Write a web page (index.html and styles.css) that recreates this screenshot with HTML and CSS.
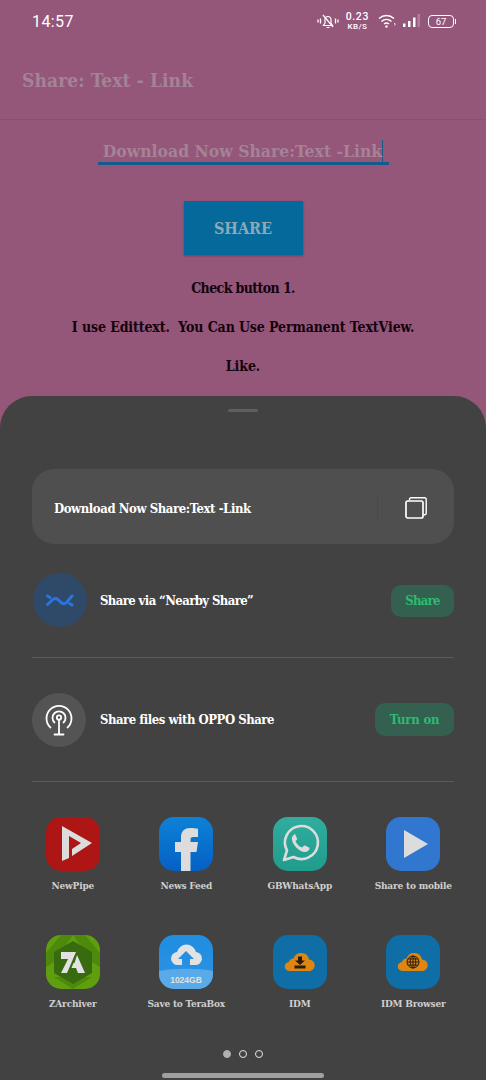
FILE: index.html
```html
<!DOCTYPE html>
<html lang="en">
<head>
	<meta charset="UTF-8">
	<title>Share: Text - Link</title>
	<link rel="stylesheet" href="styles.css">
</head>
<body>
<div class="screen">
	<div class="app">
		<div class="status">
			<span class="time">14:57</span>
			<div class="status-icons">
				<svg class="ic-bell" width="22" height="16" viewBox="0 0 22 16" fill="none" stroke="#fff" stroke-width="1.2">
					<path d="M1 6.500v3M3.500 5.500v5M18.500 5.500v5M21 6.500v3" stroke-width="1.300"/>
					<path d="M6.500 12.500h9l-1.500-2.500v-3.500a3 3 0 0 0-6 0v3.500z"/>
					<path d="M9.500 14.500h3M6 2l10 12"/>
				</svg>
				<div class="speed"><span class="speed-val">0.23</span><span class="speed-unit">KB/S</span></div>
				<svg class="ic-wifi" width="18" height="14" viewBox="0 0 18 14" fill="none" stroke="#fff" stroke-width="1.500">
					<path d="M1 4.500c4.500-4 10.500-4 15 0M3.500 7.500c3-2.700 7-2.700 10 0M6 10c1.500-1.200 3.500-1.200 5 0"/>
					<circle cx="8.500" cy="12.500" r="1.200" fill="#fff" stroke="none"/>
					<path d="M16 9l1.500 1.200-1.500 1.200" stroke-width="0.800"/>
				</svg>
				<svg class="ic-signal" width="17" height="14" viewBox="0 0 17 14">
					<rect x="0" y="9.500" width="2.500" height="3.500" fill="#fff"/>
					<rect x="5" y="7" width="2.500" height="6" fill="#fff"/>
					<rect x="10" y="3.500" width="2.500" height="9.500" fill="#fff"/>
					<rect x="14.500" y="0" width="2.500" height="13" fill="#fff" opacity="0.250"/>
				</svg>
				<div class="battery"><span>67</span></div>
			</div>
		</div>
		<div class="toolbar">Share: Text - Link</div>
		<div class="content">
			<div class="field"><span class="field-text">Download Now Share:Text -Link</span></div>
			<div class="share-btn">SHARE</div>
			<p class="note first">Check button 1.</p>
			<p class="note">I use Edittext.&nbsp; You Can Use Permanent TextView.</p>
			<p class="note">Like.</p>
		</div>
	</div>

	<div class="sheet">
		<div class="handle"></div>
		<div class="preview">
			<span class="preview-text">Download Now Share:Text -Link</span>
			<span class="preview-line"></span>
			<svg class="copy" width="22" height="22" viewBox="0 0 22 22" fill="none" stroke="#fff" stroke-width="1.700">
				<path d="M4.500 3.500V2.300A1.500 1.500 0 0 1 6 .8h13.700a1.500 1.500 0 0 1 1.500 1.500v14a1.500 1.500 0 0 1-1.500 1.500h-1.200" stroke-width="1.400"/>
				<rect x="1" y="4" width="17" height="17" rx="1.800"/>
			</svg>
		</div>

		<div class="row row-nearby">
			<div class="circle circle-blue">
				<svg width="28" height="14" viewBox="0 0 28 14" fill="none" stroke="#2a74da" stroke-width="3" stroke-linecap="round">
					<path d="M1.500 11.500L7 6.500Q9.500 4.500 12 6.500L15 9.500Q18 12 20.500 9.500L26 3"/>
					<path d="M1.500 3L4 4.500M23.500 10.500L26 12"/>
				</svg>
			</div>
			<span class="row-text">Share via “Nearby Share”</span>
			<span class="pill pill-share">Share</span>
		</div>

		<div class="row row-oppo">
			<div class="circle circle-grey">
				<svg width="28" height="32" viewBox="0 0 28 32" fill="none" stroke="#fff" stroke-width="1.800" stroke-linecap="round">
					<path d="M5.500 23.500a12.500 12.500 0 1 1 17 0"/>
					<path d="M9.500 18.500a6.500 6.500 0 1 1 9 0"/>
					<circle cx="14" cy="13.500" r="2.200"/>
					<path d="M14 16v14M9.500 30.500h9"/>
				</svg>
			</div>
			<span class="row-text">Share files with OPPO Share</span>
			<span class="pill pill-turn">Turn on</span>
		</div>

		<div class="apps">
			<div class="app-cell">
				<svg class="app-icon" viewBox="0 0 54 54">
					<rect width="54" height="54" rx="15" fill="#ae1616"/>
					<path d="M16 9L46 26 26 39V32L35 26 23 19V41L16 44z" fill="#dcdcdc"/>
				</svg>
				<span class="app-name">NewPipe</span>
			</div>
			<div class="app-cell">
				<svg class="app-icon" viewBox="0 0 54 54">
					<defs><linearGradient id="fb" x1="0" y1="0" x2="0" y2="1"><stop offset="0" stop-color="#0d82d6"/><stop offset="1" stop-color="#0560c4"/></linearGradient></defs>
					<rect width="54" height="54" rx="15" fill="url(#fb)"/>
					<path d="M22 54V35h-6V25h6v-5c0-6 4-9 9-9 3 0 6 .3 8 .8V20h-5c-2 0-2.500 1.300-2.500 3v2H39l-1.500 10h-6v19z" fill="#dcdcdc"/>
				</svg>
				<span class="app-name">News Feed</span>
			</div>
			<div class="app-cell">
				<svg class="app-icon" viewBox="0 0 54 54">
					<defs><linearGradient id="wa" x1="0" y1="0" x2="0" y2="1"><stop offset="0" stop-color="#31ad9f"/><stop offset="1" stop-color="#1f9c8c"/></linearGradient></defs>
					<rect width="54" height="54" rx="15" fill="url(#wa)"/>
					<path d="M11 43l3-9.500a16.500 16.500 0 1 1 6.500 6.500z" fill="none" stroke="#dcdcdc" stroke-width="2.600" stroke-linejoin="round"/>
					<path d="M21.500 17.500c-2 1-3 3-2.500 5.500 1 5 6.500 11 12 12 2.500.4 4.500-.8 5.500-3 .2-.7 0-1.200-.5-1.500l-4-2c-.6-.2-1 0-1.400.4l-1.300 1.700c-3-1-5.500-3.500-6.800-6.400l1.300-1.400c.4-.5.400-.9.200-1.400l-1.700-3.800c-.3-.6-.7-.7-1.500-.6z" fill="#dcdcdc"/>
				</svg>
				<span class="app-name">GBWhatsApp</span>
			</div>
			<div class="app-cell">
				<svg class="app-icon" viewBox="0 0 54 54">
					<rect width="54" height="54" rx="15" fill="#3277cf"/>
					<path d="M18 13l24 14-24 14z" fill="#dcdcdc"/>
				</svg>
				<span class="app-name">Share to mobile</span>
			</div>

			<div class="app-cell">
				<svg class="app-icon" viewBox="0 0 54 54">
					<rect width="54" height="54" rx="15" fill="#5f9e0f"/>
					<path d="M0 18L15 0h12L8 27 0 32zM54 18L39 0H27l19 27 8 5z" fill="#4d8a0c"/>
					<path d="M27 54l-19-12 38 0z" fill="#4d8a0c"/>
					<path d="M27 6l19 11v21L27 49 8 38V17z" fill="#386a10"/>
					<path d="M15 17H30L21 38H15L22 24H15z" fill="#e2e2e2"/>
					<path d="M31 20L39 38H32L30 33H25.500L27.500 28H28.500z" fill="#e2e2e2"/>
				</svg>
				<span class="app-name">ZArchiver</span>
			</div>
			<div class="app-cell">
				<svg class="app-icon" viewBox="0 0 54 54">
					<defs><linearGradient id="tb" x1="0" y1="0" x2="0" y2="1"><stop offset="0" stop-color="#1f8de0"/><stop offset="1" stop-color="#2e93e4"/></linearGradient></defs>
					<rect width="54" height="54" rx="15" fill="url(#tb)"/>
					<path d="M0 36c15-3 39-3 54 0v3a15 15 0 0 1-15 15H15A15 15 0 0 1 0 39z" fill="#5aa9e8"/>
					<path d="M19 30a6.500 6.500 0 0 1-1-13 9.800 9.800 0 0 1 19 0 6.500 6.500 0 0 1-1 13h-5v-6h4l-8-8-8 8h4v6z" fill="#e2e2e2"/>
					<text x="27" y="47.500" class="tb-text">1024GB</text>
				</svg>
				<span class="app-name">Save to TeraBox</span>
			</div>
			<div class="app-cell">
				<svg class="app-icon" viewBox="0 0 54 54">
					<rect width="54" height="54" rx="15" fill="#0f6ea6"/>
					<path d="M16.500 36a4.500 4.500 0 0 1-.5-9 4.500 4.500 0 0 1 4.500-3.500 8 8 0 0 1 15.500 1 5.800 5.800 0 0 1 1 11.500z" fill="#df8612"/>
					<path d="M25 21.500h4v4h3l-5 4.500-5-4.500h3zM21.500 30.500h11v3h-11z" fill="#2a1c0c"/>
				</svg>
				<span class="app-name">IDM</span>
			</div>
			<div class="app-cell">
				<svg class="app-icon" viewBox="0 0 54 54">
					<rect width="54" height="54" rx="15" fill="#0f6ea6"/>
					<path d="M16.500 36a4.500 4.500 0 0 1-.5-9 4.500 4.500 0 0 1 4.500-3.500 8 8 0 0 1 15.500 1 5.800 5.800 0 0 1 1 11.500z" fill="#df8612"/>
					<g fill="none" stroke="#2a1c0c" stroke-width="1">
						<circle cx="27" cy="27" r="6"/>
						<ellipse cx="27" cy="27" rx="2.800" ry="6"/>
						<path d="M27 21v12M21 27h12M21.800 24h10.400M21.800 30h10.400"/>
					</g>
				</svg>
				<span class="app-name">IDM Browser</span>
			</div>
		</div>

		<div class="dots">
			<span class="dot on"></span>
			<span class="dot"></span>
			<span class="dot"></span>
		</div>
		<div class="home-bar"></div>
	</div>
</div>
</body>
</html>
```

FILE: styles.css
```css
*{margin:0; padding:0; box-sizing:border-box;}
html,body{height:100%;}
body{background:#945679; font-family:"DejaVu Serif Condensed","DejaVu Serif","Liberation Serif",serif; font-stretch:condensed; font-weight:700; overflow:hidden;}

.screen{width:486px; height:1080px; display:flex; flex-direction:column; background:#945679;}
.app{height:396px; flex:none;}

/* status bar */
.status{height:44px; display:flex; align-items:center; justify-content:space-between; padding:0 32px 2px 32px; color:#fff;}
.time{font-family:Roboto,"Liberation Sans",sans-serif; font-weight:400; font-stretch:normal; font-size:16px; letter-spacing:0.4px;}
.status-icons{display:flex; align-items:center;}
.ic-bell{margin-right:7px;}
.speed{display:flex; flex-direction:column; align-items:center; font-family:Roboto,"Liberation Sans",sans-serif; font-weight:500; font-stretch:normal; margin-right:9px;}
.speed-val{font-size:10.500px; line-height:10px; letter-spacing:0.6px;}
.speed-unit{font-size:8px; line-height:9px; letter-spacing:0.4px;}
.ic-wifi{margin-right:7px;}
.ic-signal{margin-right:8px;}
.battery{width:26px; height:13px; border:1px solid #fff; border-radius:4px; display:flex; align-items:center; justify-content:center; position:relative; font-family:Roboto,"Liberation Sans",sans-serif; font-weight:400; font-stretch:normal; font-size:9.500px;}
.battery:after{content:""; position:absolute; right:-3px; top:3px; width:1.500px; height:5px; background:#fff;}

/* toolbar */
.toolbar{height:76px; padding:0 0 4px 22px; display:flex; align-items:center; font-size:19px; letter-spacing:0.1px; color:#a58397; border-bottom:1px solid #8a5070;}

/* content */
.content{display:flex; flex-direction:column; align-items:center; padding-top:20px;}
.field{width:291px; height:25px; border-bottom:3px solid #115c8a; display:flex; justify-content:center; font-size:17.400px; color:#a58397; line-height:22px;}
.field-text{border-right:1px solid #115c8a; height:25px; white-space:nowrap;}
.share-btn{width:119px; height:54px; margin-top:36px; background:#06699c; color:#8fa9b4; display:flex; align-items:center; justify-content:center; font-size:16px; box-shadow:0 1px 2px rgba(60,30,60,.4);}
.note{font-size:14px; letter-spacing:-0.1px; color:#12030c; line-height:20px; margin-top:19px; white-space:nowrap;}
.note.first{margin-top:23px; letter-spacing:-0.6px;}

/* bottom sheet */
.sheet{flex:1; background:#424242; border-radius:32px 32px 0 0; display:flex; flex-direction:column; padding-top:13px; position:relative;}
.handle{width:30px; height:3px; border-radius:2px; background:#5f5f5f; align-self:center;}
.preview{height:75px; margin:57px 32px 0 32px; background:#4f4f4f; border-radius:22px; display:flex; align-items:center; padding:0 27px 0 22px;}
.preview-text{flex:1; color:#fff; font-size:13px; letter-spacing:-0.42px; padding-top:4px;}
.preview-line{width:1px; height:24px; background:#484848; margin-right:27px;}
.copy{margin-top:2px;}

.row{display:flex; align-items:center; color:#fff;}
.row-nearby{height:99px; margin-top:14px; padding:0 32px 15px 33px;}
.row-oppo{height:125px; margin:0 32px; border-top:1px solid #5a5a5a; border-bottom:1px solid #5a5a5a;}
.circle{width:54px; height:54px; border-radius:50%; display:flex; align-items:center; justify-content:center; flex:none;}
.circle-blue{background:#2f4a68;}
.circle-grey{background:#545454;}
.row-text{flex:1; font-size:13px; letter-spacing:-0.48px; padding-left:13px; white-space:nowrap;}
.row-nearby .row-text{letter-spacing:-0.6px;}
.row-oppo .row-text{padding-left:14px;}
.pill{border-radius:10px; background:#33604f; color:#2dbb74; font-size:13px; display:flex; align-items:center; justify-content:center;}
.pill-share{width:63px; height:32px; margin-top:1px; letter-spacing:-0.7px;}
.pill-turn{width:79px; height:33px; letter-spacing:-0.2px;}

.apps{display:grid; grid-template-columns:repeat(4,113.500px); grid-auto-rows:118px; margin:35px 0 0 16px;}
.app-cell{display:flex; flex-direction:column; align-items:center;}
.app-icon{width:54px; height:54px; display:block;}
.app-name{font-size:10px; letter-spacing:-0.2px; color:#cfcfcf; margin-top:8px; line-height:14px; white-space:nowrap;}
.tb-text{font-family:"Liberation Sans",sans-serif; font-size:8.500px; font-weight:700; letter-spacing:0; fill:#e2e2e2; text-anchor:middle;}

.dots{position:absolute; left:223px; top:654px; display:flex; gap:8px;}
.dot{width:8px; height:8px; border-radius:50%; border:1.500px solid #e6e6e6;}
.dot.on{background:#b0b0b0; border-color:#b0b0b0;}
.home-bar{position:absolute; left:162px; top:677px; width:162px; height:5px; border-radius:3px; background:#a0a0a0;}
```
